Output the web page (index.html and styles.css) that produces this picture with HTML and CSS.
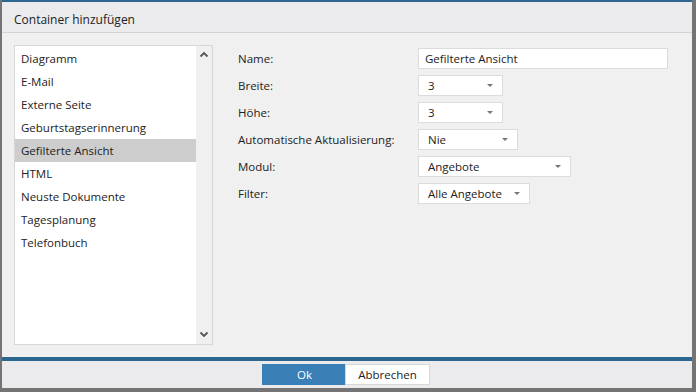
FILE: index.html
```html
<!DOCTYPE html>
<html lang="de">
<head>
    <meta charset="UTF-8">
    <meta name="viewport" content="width=device-width, initial-scale=1.0">
    <link rel="stylesheet" href="styles.css">
    <title>Container hinzufügen</title>
</head>
<body>
    <div class="dialog">
        <div class="dialog-header">Container hinzufügen</div>
        <div class="dialog-body">
            <div class="type-list">
                <ul class="type-items">
                    <li>Diagramm</li>
                    <li>E-Mail</li>
                    <li>Externe Seite</li>
                    <li>Geburtstagserinnerung</li>
                    <li class="selected">Gefilterte Ansicht</li>
                    <li>HTML</li>
                    <li>Neuste Dokumente</li>
                    <li>Tagesplanung</li>
                    <li>Telefonbuch</li>
                </ul>
                <div class="scrollbar">
                    <svg width="10" height="7" viewBox="0 0 10 7"><path d="M1.5 5.5 L5 2 L8.5 5.5" fill="none" stroke="#555" stroke-width="1.8"/></svg>
                    <svg width="10" height="7" viewBox="0 0 10 7"><path d="M1.5 1.5 L5 5 L8.5 1.5" fill="none" stroke="#555" stroke-width="1.8"/></svg>
                </div>
            </div>
            <div class="form">
                <div class="form-row">
                    <label>Name:</label>
                    <div class="field text-field wide">Gefilterte Ansicht</div>
                </div>
                <div class="form-row">
                    <label>Breite:</label>
                    <div class="field select w-85"><span>3</span><i class="caret"></i></div>
                </div>
                <div class="form-row">
                    <label>Höhe:</label>
                    <div class="field select w-85"><span>3</span><i class="caret"></i></div>
                </div>
                <div class="form-row">
                    <label>Automatische Aktualisierung:</label>
                    <div class="field select w-100"><span>Nie</span><i class="caret"></i></div>
                </div>
                <div class="form-row">
                    <label>Modul:</label>
                    <div class="field select w-153"><span>Angebote</span><i class="caret"></i></div>
                </div>
                <div class="form-row">
                    <label>Filter:</label>
                    <div class="field select w-112"><span>Alle Angebote</span><i class="caret"></i></div>
                </div>
            </div>
        </div>
        <div class="dialog-footer">
            <button class="btn btn-primary">Ok</button>
            <button class="btn">Abbrechen</button>
        </div>
    </div>
</body>
</html>
```

FILE: styles.css
```css
body {
    margin: 0;
    background-color: #747474;
    font-family: "Open Sans", "Noto Sans", sans-serif;
    font-size: 11.5px;
    color: #222;
}

.dialog {
    margin-left: 2px;
    width: 690px;
    height: 388px;
    display: flex;
    flex-direction: column;
    border-top: 2px solid #2d6690;
    box-sizing: border-box;
    background-color: #f0f0f0;
}

.dialog-header {
    height: 25px;
    line-height: 25px;
    padding: 5px 0 0 12px;
    background-color: #ebebed;
    border-bottom: 1px solid #d4d4d4;
    font-size: 12px;
    color: #222;
}

.dialog-body {
    flex: 1;
    display: flex;
    padding: 12px;
    gap: 25px;
}

.type-list {
    width: 199px;
    height: 300px;
    box-sizing: border-box;
    border: 1px solid #d6d6d6;
    background-color: #fff;
    display: flex;
}

.type-items {
    list-style: none;
    margin: 0;
    padding: 1px 0 0;
    flex: 1;
}

.type-items li {
    height: 23px;
    line-height: 23px;
    padding-left: 6px;
    color: #222;
}

.type-items li.selected {
    background-color: #cdcdcd;
}

.scrollbar {
    width: 16px;
    background-color: #f0f0f0;
    display: flex;
    flex-direction: column;
    justify-content: space-between;
    align-items: center;
    padding: 5px 0 6px;
}

.form {
    display: flex;
    flex-direction: column;
    gap: 6px;
    padding-top: 3px;
}

.form-row {
    display: flex;
    align-items: center;
    height: 21px;
}

.form-row label {
    width: 180px;
}

.field {
    height: 21px;
    box-sizing: border-box;
    border: 1px solid #dcdcdc;
    background-color: #fff;
    display: flex;
    align-items: center;
}

.text-field {
    padding-left: 6px;
}

.wide {
    width: 250px;
}

.select {
    padding: 0 9px 0 9px;
    justify-content: space-between;
}

.w-85 { width: 85px; }
.w-100 { width: 100px; }
.w-112 { width: 112px; }
.w-153 { width: 153px; }

.caret {
    width: 0;
    height: 0;
    border-left: 3px solid transparent;
    border-right: 3px solid transparent;
    border-top: 3px solid #777;
}

.dialog-footer {
    height: 27px;
    border-top: 4px solid #2d6690;
    background-color: #ebebee;
    display: flex;
    justify-content: center;
    align-items: flex-start;
    padding: 3px 0 0 0;
    box-sizing: content-box;
}

.btn {
    height: 21px;
    width: 85px;
    font-family: inherit;
    font-size: 11.5px;
    border: 1px solid #d8d8d8;
    background-color: #fff;
    color: #222;
    padding: 0;
    margin-left: -2px;
}

.btn-primary {
    background-color: #3a7fb6;
    border-color: #3a7fb6;
    color: #fff;
}
```
